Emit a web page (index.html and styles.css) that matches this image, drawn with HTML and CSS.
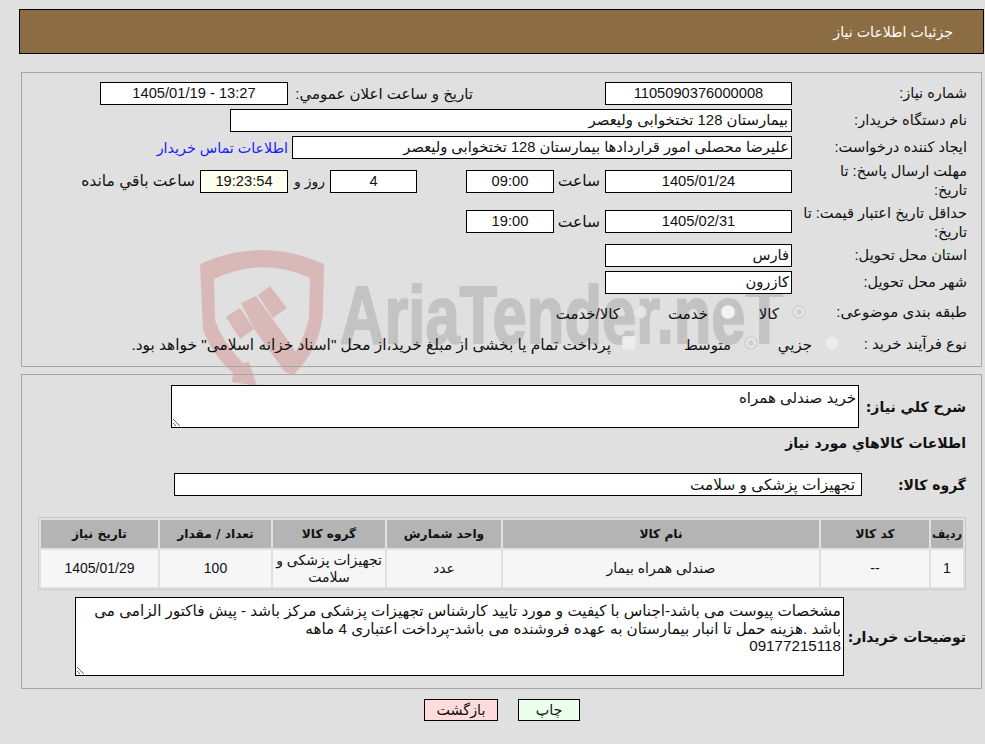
FILE: index.html
```html
<!DOCTYPE html>
<html lang="fa" dir="rtl">
<head>
<meta charset="utf-8">
<title>جزئیات اطلاعات نیاز</title>
<link rel="stylesheet" href="styles.css">
</head>
<body>
<svg class="watermark" viewBox="190 240 610 160" aria-hidden="true">
  <g class="wm-red">
    <path d="M200 264Q262 236 324 264L323 312Q320 350 293 375L285 368Q303 345 309 318L310 278Q262 256 214 279L215 320Q222 342 243 363L249 362L257 386L232 382L233 373Q212 355 203 330Z"/>
    <polygon points="226,317 240,308 254,329 240,339"/>
    <polygon points="241,303 256,296 272,318 296,352 293,375 285,372 254,329"/>
    <polygon points="258,295 270,286 287,308 273,318"/>
  </g>
  <text class="wm-text" direction="ltr" text-anchor="start" transform="translate(340 343) scale(0.75 1)">AriaTender.neT</text>
</svg>

<header class="title-bar"><h1 class="title">جزئیات اطلاعات نیاز</h1></header>

<section class="panel panel-info">
  <div class="row">
    <div class="label">شماره نیاز:</div>
    <div class="field w187 center">1105090376000008</div>
    <div class="label-public">تاریخ و ساعت اعلان عمومي:</div>
    <div class="field w188 center">13:27 - 1405/01/19</div>
  </div>
  <div class="row">
    <div class="label">نام دستگاه خریدار:</div>
    <div class="field w562 pad3">بیمارستان 128 تختخوابی ولیعصر</div>
  </div>
  <div class="row">
    <div class="label">ایجاد کننده درخواست:</div>
    <div class="field w500">علیرضا محصلی امور قراردادها بیمارستان 128 تختخوابی ولیعصر</div>
    <a class="contact" href="#">اطلاعات تماس خریدار</a>
  </div>
  <div class="row row-h36">
    <div class="label">مهلت ارسال پاسخ: تا<br>تاریخ:</div>
    <div class="field w187 center">1405/01/24</div>
    <div class="label-time">ساعت</div>
    <div class="field w88 center">09:00</div>
    <div class="field w87 center gap49">4</div>
    <div class="label-day">روز و</div>
    <div class="field w88 center timer">19:23:54</div>
    <div class="label-left">ساعت باقي مانده</div>
  </div>
  <div class="row row-h37">
    <div class="label label-low">حداقل تاریخ اعتبار قیمت: تا<br>تاریخ:</div>
    <div class="field w187 center">1405/02/31</div>
    <div class="label-time">ساعت</div>
    <div class="field w88 center">19:00</div>
  </div>
  <div class="row">
    <div class="label">استان محل تحویل:</div>
    <div class="field w187">فارس</div>
  </div>
  <div class="row">
    <div class="label">شهر محل تحویل:</div>
    <div class="field w187">کازرون</div>
  </div>
  <div class="row row-opt">
    <div class="label label-opt">طبقه بندی موضوعی:</div>
    <div class="opt w71"><span class="radio on"></span><span class="opt-text">کالا</span></div>
    <div class="opt w88"><span class="radio bright"></span><span class="opt-text">خدمت</span></div>
    <div class="opt"><span class="radio faint"></span><span class="opt-text">کالا/خدمت</span></div>
  </div>
  <div class="row row-opt">
    <div class="label label-opt2">نوع فرآیند خرید :</div>
    <div class="opt w81"><span class="radio"></span><span class="opt-text">جزیي</span></div>
    <div class="opt w122"><span class="radio on"></span><span class="opt-text">متوسط</span></div>
    <div class="opt"><span class="check"></span><span class="opt-text opt-long">پرداخت تمام یا بخشی از مبلغ خرید،از محل "اسناد خزانه اسلامی" خواهد بود.</span></div>
  </div>
</section>

<section class="panel panel-goods">
  <div class="row">
    <div class="label-strong w107">شرح کلي نیاز:</div>
    <textarea class="area area-desc" readonly>خرید صندلی همراه</textarea>
  </div>
  <h2 class="subhead">اطلاعات کالاهاي مورد نیاز</h2>
  <div class="row">
    <div class="label-strong w104">گروه کالا:</div>
    <div class="field w688 field-group">تجهیزات پزشکی و سلامت</div>
  </div>
  <table class="goods">
    <colgroup>
      <col class="c1"><col class="c2"><col class="c3"><col class="c4"><col class="c5"><col class="c6"><col class="c7">
    </colgroup>
    <thead>
      <tr><th class="th-narrow">ردیف</th><th>کد کالا</th><th>نام کالا</th><th>واحد شمارش</th><th>گروه کالا</th><th>تعداد / مقدار</th><th>تاریخ نیاز</th></tr>
    </thead>
    <tbody>
      <tr><td>1</td><td>--</td><td>صندلی همراه بیمار</td><td>عدد</td><td>تجهیزات پزشکی و سلامت</td><td>100</td><td>1405/01/29</td></tr>
    </tbody>
  </table>
  <div class="row">
    <div class="label-strong w122">توضیحات خریدار:</div>
    <textarea class="area area-notes" readonly>مشخصات پیوست می باشد-اجناس با کیفیت و مورد تایید کارشناس تجهیزات پزشکی مرکز باشد - پیش فاکتور الزامی می باشد .هزینه حمل تا انبار بیمارستان به عهده فروشنده می باشد-پرداخت اعتباری 4 ماهه
09177215118</textarea>
  </div>
</section>

<div class="actions">
  <button class="btn btn-print" type="button">چاپ</button>
  <button class="btn btn-back" type="button">بازگشت</button>
</div>
</body>
</html>
```
FILE: styles.css
```css
html { background: #e0e0e0; }
* { box-sizing: border-box; }
body {
  margin: 0;
  padding-top: 9px;
  height: 744px;
  overflow: hidden;
  position: relative;
  font-family: "Liberation Sans", "DejaVu Sans", sans-serif;
  font-size: 14.6px;
  color: #111;
}
.watermark {
  position: absolute;
  left: 190px;
  top: 240px;
  width: 610px;
  height: 160px;
  z-index: -1;
}
.wm-red { fill: #d9b8b8; }
.wm-text {
  direction: ltr;
  fill: #c3c3c3;
  stroke: #c3c3c3;
  stroke-width: 2px;
  font-family: "Liberation Sans", sans-serif;
  font-weight: 700;
  font-size: 82px;
}

.title-bar {
  margin-left: 19px;
  margin-right: 1px;
  height: 45px;
  background: #8c6c42;
  border: 1px solid #000;
  padding-right: 30px;
  display: flex;
  align-items: center;
}
.title { margin: 0; font-size: 14.2px; font-weight: 400; color: #fff; }

.panel {
  margin-left: 21px;
  margin-right: 3px;
  border: 1px solid #a6a6a6;
  display: flex;
  flex-direction: column;
}
.panel-info { margin-top: 18px; height: 295px; padding: 9px 14px 0 0; gap: 4px; }
.panel-goods { margin-top: 7px; height: 315px; padding: 10px 15px 0 0; }

.row { display: flex; align-items: center; min-height: 23px; }
.row-h36 { height: 36px; }
.row-h37 { height: 37px; }
.row-opt { height: 27px; }

.label { width: 175px; flex: none; line-height: 19px; white-space: nowrap; }
.label-low { padding-top: 3px; }
.label-opt { width: 161px; font-size: 15px; }
.label-opt2 { width: 128px; font-size: 15px; padding-top: 2px; }
.label-public { margin-right: 132px; width: 185px; font-size: 15px; white-space: nowrap; }
.label-time { width: 51px; padding-right: 5px; font-size: 15.5px; white-space: nowrap; }
.label-day { width: 42px; padding-right: 5px; font-size: 14px; white-space: nowrap; }
.label-left { padding-right: 5px; font-size: 15.5px; white-space: nowrap; }
.contact { margin-right: 4px; font-size: 14.3px; color: #1a1aff; text-decoration: none; white-space: nowrap; }

.field {
  flex: none;
  height: 23px;
  line-height: 21px;
  font-size: 14.7px;
  background: #fff;
  border: 1px solid #000;
  padding: 0 2px;
  white-space: nowrap;
  overflow: hidden;
}
.pad3 { padding-right: 3px; font-size: 14.9px; }
.field-group { font-size: 15.3px; padding-right: 6px; }
.center { text-align: center; }
.timer { background: #fffff0; }
.gap49 { margin-right: 49px; }
.w87 { width: 87px; }
.w88 { width: 88px; }
.w187 { width: 187px; }
.w188 { width: 188px; }
.w500 { width: 500px; }
.w562 { width: 562px; }
.w688 { width: 688px; }

.opt { display: flex; align-items: center; gap: 13px; white-space: nowrap; flex: none; font-size: 15px; }
.w71 { width: 71px; }
.w81 { width: 81px; }
.w122 { width: 122px; }
.opt-text { padding-top: 5px; }
.opt-long { font-size: 15.4px; margin-right: -2px; }
.radio, .check {
  flex: none;
  width: 14px;
  height: 14px;
  background: #ededed;
  border: 1px solid #e6e6e6;
}
.radio { border-radius: 50%; }
.check { border-radius: 2px; }
.radio.on { background: #cfcfcf; border: 2px solid #d4d4d4; box-shadow: inset 0 0 0 2px #ececec; }
.radio.bright { background: #f4f4f4; border-color: #efefef; }
.radio.faint { background: #e6e6e6; border-color: #d6d6d6; }

.label-strong { flex: none; font-family: "DejaVu Sans", sans-serif; font-weight: 700; font-size: 14px; white-space: nowrap; }
.w104 { width: 104px; }
.w107 { width: 107px; }
.subhead { margin: 6px 0 21px; font-family: "DejaVu Sans", sans-serif; font-size: 14px; font-weight: 700; line-height: 18px; }

.area {
  display: block;
  flex: none;
  background: #fff;
  border: 1px solid #000;
  padding: 3px 2px;
  font: inherit;
  line-height: 17.5px;
  color: #111;
  resize: both;
  outline: none;
}
.area-desc { width: 688px; height: 43px; font-size: 15px; }
.area-notes { width: 769px; height: 79px; padding-top: 4px; font-size: 15.2px; }

.goods {
  width: 928px;
  margin: 21px 0 7px 0;
  table-layout: fixed;
  border: 1px solid #c8c8c8;
  border-spacing: 2px;
}
.c1 { width: 32px; }
.c2 { width: 108px; }
.c3 { width: 316px; }
.c4 { width: 114px; }
.c5 { width: 112px; }
.c6 { width: 111px; }
.c7 { width: 117px; }
.goods th {
  height: 28px;
  padding: 0;
  background: #b4b4b4;
  font-family: "DejaVu Sans", sans-serif;
  font-size: 12.2px;
  font-weight: 700;
  text-align: center;
}
.goods .th-narrow { font-size: 11.4px; }
.goods td {
  height: 37px;
  padding: 0 2px;
  background: #f6f6f6;
  font-size: 14px;
  text-align: center;
  line-height: 17px;
}

.actions {
  display: flex;
  justify-content: center;
  gap: 20px;
  margin-top: 10px;
  padding-left: 19px;
}
.btn {
  height: 22px;
  padding: 0;
  border: 1px solid #000;
  font: inherit;
  font-size: 14.3px;
  color: #111;
}
.btn-print { width: 62px; background: #ecffec; }
.btn-back { width: 74px; background: #ffdcdc; }
```
